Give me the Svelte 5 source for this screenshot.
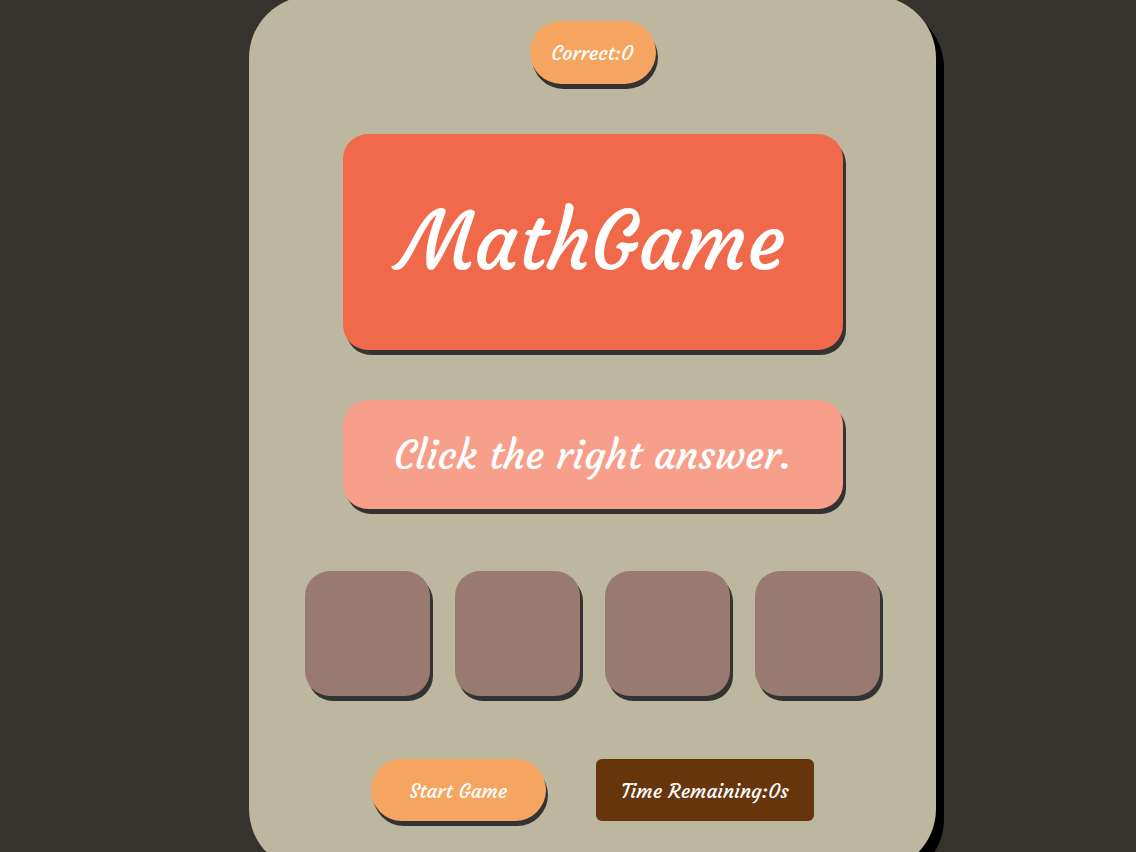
<script>
  let correct = $state(0);
  let remaining = $state(0);
  let playing = $state(false);
  let question = $state('MathGame');
  let choices = $state(['', '', '', '']);
  let answer = 0;
  let timer;

  function nextQuestion() {
    const a = 1 + Math.floor(Math.random() * 9);
    const b = 1 + Math.floor(Math.random() * 9);
    answer = a * b;
    question = `${a}x${b}`;
    const options = new Set([answer]);
    while (options.size < 4) {
      options.add((1 + Math.floor(Math.random() * 9)) * (1 + Math.floor(Math.random() * 9)));
    }
    choices = [...options].sort(() => Math.random() - 0.5);
  }

  function toggle() {
    clearInterval(timer);
    playing = !playing;
    if (!playing) return;
    correct = 0;
    remaining = 60;
    nextQuestion();
    timer = setInterval(() => {
      remaining -= 1;
      if (remaining === 0) {
        clearInterval(timer);
        playing = false;
      }
    }, 1000);
  }

  function choose(value) {
    if (playing && value === answer) {
      correct += 1;
      nextQuestion();
    }
  }
</script>

<div class="page">
  <main class="board">
    <div class="pill score">Correct:{correct}</div>
    <h1 class="card question">{question}</h1>
    <p class="card instruction">Click the right answer.</p>
    <div class="choices">
      {#each choices as value, i}
        <button class="card choice" aria-label={value === '' ? `Answer ${i + 1}` : undefined} onclick={() => choose(value)}>{value}</button>
      {/each}
    </div>
    <div class="controls">
      <button class="pill start" onclick={toggle}>{playing ? 'Reset Game' : 'Start Game'}</button>
      <div class="time">Time Remaining:{remaining}s</div>
    </div>
  </main>
</div>

<style>
  :global(body) {
    margin: 0;
    background: #36322d;
  }

  .page {
    display: flow-root;
    padding-left: 49px;
    color: #fff;
    font: 400 20px Courgette, Lato, cursive;
  }

  .board {
    box-sizing: border-box;
    display: flex;
    flex-direction: column;
    align-items: center;
    max-width: 687px;
    margin: -4px auto 0;
    padding: 25px 24px 50px;
    border-radius: 62px;
    background: #bdb79f;
    box-shadow: 8px 10px #000;
  }

  .pill,
  .card,
  .time {
    box-sizing: border-box;
    display: flex;
    align-items: center;
    justify-content: center;
    margin: 0;
    border: 0;
    color: inherit;
    font: inherit;
    white-space: nowrap;
  }

  .pill {
    border-radius: 32px;
    background: #f5a560;
    box-shadow: 2px 5px #333;
  }

  .card {
    border-radius: 25px;
    box-shadow: 3px 5px #333;
  }

  .score {
    min-width: 126px;
    min-height: 63px;
    padding: 0 20px;
  }

  .question,
  .instruction {
    width: 100%;
    max-width: 500px;
    margin-top: 50px;
  }

  .question {
    min-height: 216px;
    background: #f0694a;
    font-size: 80px;
  }

  .instruction {
    min-height: 109px;
    background: #f89f8b;
    font-size: 40px;
  }

  .choices {
    display: grid;
    grid-template-columns: repeat(4, 125px);
    gap: 25px;
    margin-top: 62px;
  }

  .choice {
    height: 125px;
    background: #997a71;
    font-size: 40px;
  }

  .controls {
    display: flex;
    gap: 50px;
    min-height: 62px;
    margin-top: 63px;
  }

  .start {
    min-width: 175px;
  }

  .start,
  .choice {
    cursor: pointer;
  }

  .time {
    min-width: 218px;
    padding: 0 24px;
    border-radius: 6px;
    background: #66350c;
  }
</style>
